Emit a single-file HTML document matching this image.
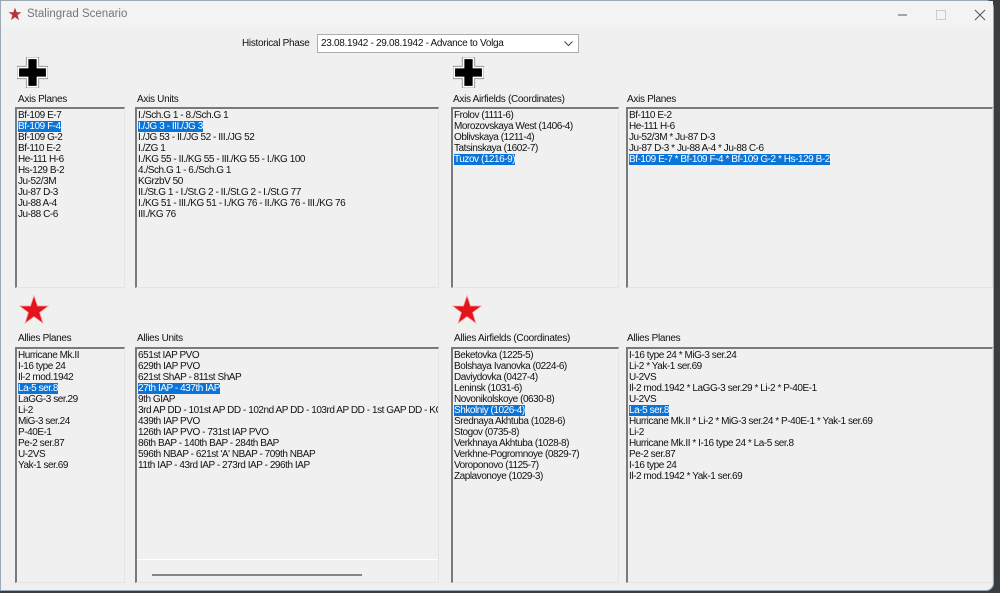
<!DOCTYPE html>
<html><head><meta charset="utf-8"><style>
body{margin:0;width:1000px;height:593px;background:#3a3d40;overflow:hidden;font-family:"Liberation Sans",sans-serif;}
.win{position:absolute;left:0;top:0;width:994px;height:591px;background:#f0f0f0;border-radius:0 8px 8px 0;border:1px solid #9aa8b8;box-sizing:border-box;}
.title{position:absolute;left:0;top:0;width:100%;height:26px;background:#f3f3f3;}
.title span{position:absolute;left:26px;top:7px;font-size:11.5px;color:#777;}
.lbl{position:absolute;font-size:10px;color:#111;letter-spacing:-0.3px;white-space:nowrap;}
.lb{position:absolute;box-sizing:border-box;border-top:2px solid #7a7a7a;border-left:2px solid #7a7a7a;border-right:1px solid #e4e4e4;border-bottom:1px solid #e4e4e4;background:#f0f0f0;overflow:hidden;padding-top:1px;}
.lb div{font-size:10px;letter-spacing:-0.45px;line-height:11px;height:11px;padding-left:1px;white-space:nowrap;color:#111;}
.lb div.s span{background:#0a74d8;color:#fff;}
.combo{position:absolute;left:316px;top:33px;width:262px;height:19px;box-sizing:border-box;border:1px solid #adadad;background:#fff;font-size:10px;letter-spacing:-0.3px;line-height:17px;padding-left:3px;color:#111;}
</style></head><body>
<div class="win">
<div class="title">
<svg style="position:absolute;left:7px;top:6px" width="14" height="14" viewBox="0 0 24 24"><polygon points="12,1 14.8,9 23,9 16.4,14 18.9,22.5 12,17.4 5.1,22.5 7.6,14 1,9 9.2,9" fill="#b5323a"/></svg>
<span>Stalingrad Scenario</span>
<svg style="position:absolute;left:897px;top:8px" width="90" height="12"><line x1="0" y1="6" x2="9" y2="6" stroke="#555" stroke-width="1"/><rect x="38.5" y="1.5" width="9" height="9" fill="none" stroke="#ccc"/><path d="M77 1 L87 11 M87 1 L77 11" stroke="#555" stroke-width="1"/></svg>
</div>
<div class="lbl" style="left:241px;top:37px">Historical Phase</div>
<div class="combo">23.08.1942 - 29.08.1942 - Advance to Volga
<svg style="position:absolute;right:5px;top:6px" width="9" height="6"><path d="M0.5 0.5 L4.5 4.5 L8.5 0.5" fill="none" stroke="#444"/></svg></div>

<svg style="position:absolute;left:16px;top:56px" width="31" height="31" viewBox="0 0 30 30"><path d="M9 0H21V9H30V21H21V30H9V21H0V9H9Z" fill="#fff" stroke="#888" stroke-width="0.8"/><path d="M11 2H19V11H28V19H19V28H11V19H2V11H11Z" fill="#000"/></svg>
<svg style="position:absolute;left:452px;top:56px" width="31" height="31" viewBox="0 0 30 30"><path d="M9 0H21V9H30V21H21V30H9V21H0V9H9Z" fill="#fff" stroke="#888" stroke-width="0.8"/><path d="M11 2H19V11H28V19H19V28H11V19H2V11H11Z" fill="#000"/></svg>
<svg style="position:absolute;left:18px;top:294px" width="30" height="30" viewBox="0 0 24 24"><polygon points="12,0.5 14.8,8.8 23.5,8.8 16.5,14 19.1,22.5 12,17.3 4.9,22.5 7.5,14 0.5,8.8 9.2,8.8" fill="#e4141c" stroke="#f5a0a0" stroke-width="0.6"/></svg>
<svg style="position:absolute;left:451px;top:294px" width="30" height="30" viewBox="0 0 24 24"><polygon points="12,0.5 14.8,8.8 23.5,8.8 16.5,14 19.1,22.5 12,17.3 4.9,22.5 7.5,14 0.5,8.8 9.2,8.8" fill="#e4141c" stroke="#f5a0a0" stroke-width="0.6"/></svg>

<div class="lbl" style="left:17px;top:93px">Axis Planes</div>
<div class="lbl" style="left:136px;top:93px">Axis Units</div>
<div class="lbl" style="left:452px;top:93px">Axis Airfields (Coordinates)</div>
<div class="lbl" style="left:626px;top:93px">Axis Planes</div>

<div class="lb" style="left:14px;top:106px;width:110px;height:181px">
<div>Bf-109 E-7</div><div class="s"><span>Bf-109 F-4</span></div><div>Bf-109 G-2</div><div>Bf-110 E-2</div><div>He-111 H-6</div><div>Hs-129 B-2</div><div>Ju-52/3M</div><div>Ju-87 D-3</div><div>Ju-88 A-4</div><div>Ju-88 C-6</div></div>
<div class="lb" style="left:134px;top:106px;width:304px;height:181px">
<div>I./Sch.G 1 - 8./Sch.G 1</div><div class="s"><span>I./JG 3 - III./JG 3</span></div><div>I./JG 53 - II./JG 52 - III./JG 52</div><div>I./ZG 1</div><div>I./KG 55 - II./KG 55 - III./KG 55 - I./KG 100</div><div>4./Sch.G 1 - 6./Sch.G 1</div><div>KGrzbV 50</div><div>II./St.G 1 - I./St.G 2 - II./St.G 2 - I./St.G 77</div><div>I./KG 51 - III./KG 51 - I./KG 76 - II./KG 76 - III./KG 76</div><div>III./KG 76</div></div>
<div class="lb" style="left:450px;top:106px;width:168px;height:181px">
<div>Frolov (1111-6)</div><div>Morozovskaya West (1406-4)</div><div>Oblivskaya (1211-4)</div><div>Tatsinskaya (1602-7)</div><div class="s"><span>Tuzov (1216-9)</span></div></div>
<div class="lb" style="left:625px;top:106px;width:367px;height:181px">
<div>Bf-110 E-2</div><div>He-111 H-6</div><div>Ju-52/3M * Ju-87 D-3</div><div>Ju-87 D-3 * Ju-88 A-4 * Ju-88 C-6</div><div class="s"><span>Bf-109 E-7 * Bf-109 F-4 * Bf-109 G-2 * Hs-129 B-2</span></div></div>

<div class="lbl" style="left:17px;top:332px">Allies Planes</div>
<div class="lbl" style="left:136px;top:332px">Allies Units</div>
<div class="lbl" style="left:453px;top:332px">Allies Airfields (Coordinates)</div>
<div class="lbl" style="left:626px;top:332px">Allies Planes</div>

<div class="lb" style="left:14px;top:346px;width:110px;height:236px">
<div>Hurricane Mk.II</div><div>I-16 type 24</div><div>Il-2 mod.1942</div><div class="s"><span>La-5 ser.8</span></div><div>LaGG-3 ser.29</div><div>Li-2</div><div>MiG-3 ser.24</div><div>P-40E-1</div><div>Pe-2 ser.87</div><div>U-2VS</div><div>Yak-1 ser.69</div></div>
<div class="lb" style="left:134px;top:346px;width:304px;height:236px">
<div>651st IAP PVO</div><div>629th IAP PVO</div><div>621st ShAP - 811st ShAP</div><div class="s"><span>27th IAP - 437th IAP</span></div><div>9th GIAP</div><div>3rd AP DD - 101st AP DD - 102nd AP DD - 103rd AP DD - 1st GAP DD - KG</div><div>439th IAP PVO</div><div>126th IAP PVO - 731st IAP PVO</div><div>86th BAP - 140th BAP - 284th BAP</div><div>596th NBAP - 621st 'A' NBAP - 709th NBAP</div><div>11th IAP - 43rd IAP - 273rd IAP - 296th IAP</div>
<span style="position:absolute;left:0;right:0;top:210px;height:1px;background:#fff"></span>
<span style="position:absolute;left:15px;top:225px;width:210px;height:2px;background:#858585"></span>
</div>
<div class="lb" style="left:450px;top:346px;width:168px;height:236px">
<div>Beketovka (1225-5)</div><div>Bolshaya Ivanovka (0224-6)</div><div>Daviydovka (0427-4)</div><div>Leninsk (1031-6)</div><div>Novonikolskoye (0630-8)</div><div class="s"><span>Shkolniy (1026-4)</span></div><div>Srednaya Akhtuba (1028-6)</div><div>Stogov (0735-8)</div><div>Verkhnaya Akhtuba (1028-8)</div><div>Verkhne-Pogromnoye (0829-7)</div><div>Voroponovo (1125-7)</div><div>Zaplavonoye (1029-3)</div></div>
<div class="lb" style="left:625px;top:346px;width:367px;height:236px">
<div>I-16 type 24 * MiG-3 ser.24</div><div>Li-2 * Yak-1 ser.69</div><div>U-2VS</div><div>Il-2 mod.1942 * LaGG-3 ser.29 * Li-2 * P-40E-1</div><div>U-2VS</div><div class="s"><span>La-5 ser.8</span></div><div>Hurricane Mk.II * Li-2 * MiG-3 ser.24 * P-40E-1 * Yak-1 ser.69</div><div>Li-2</div><div>Hurricane Mk.II * I-16 type 24 * La-5 ser.8</div><div>Pe-2 ser.87</div><div>I-16 type 24</div><div>Il-2 mod.1942 * Yak-1 ser.69</div></div>
</div>
</body></html>
